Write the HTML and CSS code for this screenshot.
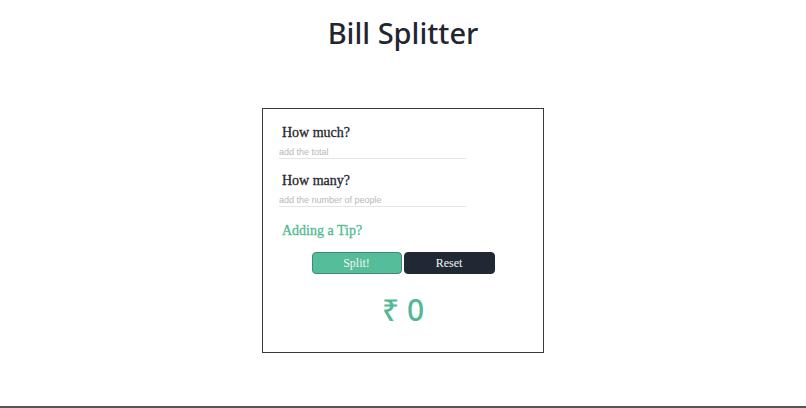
FILE: index.html
```html
<!DOCTYPE html>
<html>
<head>
<meta charset="utf-8">
<link rel="stylesheet" href="styles.css">
</head>
<body>
<div class="page">
  <h1 class="title">Bill Splitter</h1>
  <div class="card">
    <label class="label" for="total">How much?</label>
    <input class="field" id="total" type="text" placeholder="add the total">
    <label class="label" for="people">How many?</label>
    <input class="field" id="people" type="text" placeholder="add the number of people">
    <div class="tip">Adding a Tip?</div>
    <div class="actions">
      <button class="btn btn-split">Split!</button>
      <button class="btn btn-reset">Reset</button>
    </div>
    <div class="result">₹ 0</div>
  </div>
  <div class="bottom-bar"></div>
</div>
</body>
</html>
```

FILE: styles.css
```css
* { box-sizing: border-box; }
html, body { margin: 0; padding: 0; background: #fff; }
.page {
  height: 408px;
  display: flex;
  flex-direction: column;
  align-items: center;
}
.title {
  margin: 12px 0 0 0;
  font-family: "Noto Sans", sans-serif;
  font-weight: 500;
  font-size: 29px;
  line-height: 42px;
  color: #1f2630;
}
.card {
  margin-top: 54px;
  width: 282px;
  height: 245px;
  border: 1px solid #3a3a3a;
  padding: 14px 0 0 16px;
  display: flex;
  flex-direction: column;
  align-items: flex-start;
}
.label {
  font-family: "Liberation Serif", serif;
  font-size: 14px;
  line-height: 20px;
  color: #1f2630;
  margin-left: 3px;
  -webkit-text-stroke: 0.3px #1f2630;
}
.field {
  margin-top: 3px;
  width: 187px;
  height: 13px;
  padding: 0 0 1px 0;
  border: none;
  border-bottom: 1px solid #e4e4e4;
  font-family: "Liberation Sans", sans-serif;
  font-size: 9px;
  outline: none;
  margin-bottom: 12px;
}
.field::placeholder { color: #b8b8b8; }
.tip {
  margin-left: 3px;
  margin-top: 2px;
  font-family: "Liberation Serif", serif;
  font-size: 14px;
  line-height: 20px;
  color: #52b994;
  -webkit-text-stroke: 0.3px #52b994;
}
.actions {
  align-self: stretch;
  margin-left: -16px;
  margin-top: 11px;
  display: flex;
  justify-content: center;
  gap: 2px;
}
.btn {
  width: 91px;
  height: 22px;
  border-radius: 4px;
  font-family: "Liberation Serif", serif;
  font-size: 12px;
  color: #f4f6f5;
  padding: 0;
  cursor: pointer;
}
.btn-split { background: #55bd99; border: 1px solid #3f8a70; width: 90px; }
.btn-reset { background: #1f2833; border: 1px solid #1f2833; }
.result {
  align-self: stretch;
  margin-left: -16px;
  margin-top: 18px;
  text-align: center;
  font-family: "Noto Sans", sans-serif;
  font-weight: 500;
  font-size: 30px;
  line-height: 36px;
  color: #52b994;
}
.bottom-bar {
  margin-top: auto;
  width: 100%;
  height: 2px;
  background: #555;
}
```
